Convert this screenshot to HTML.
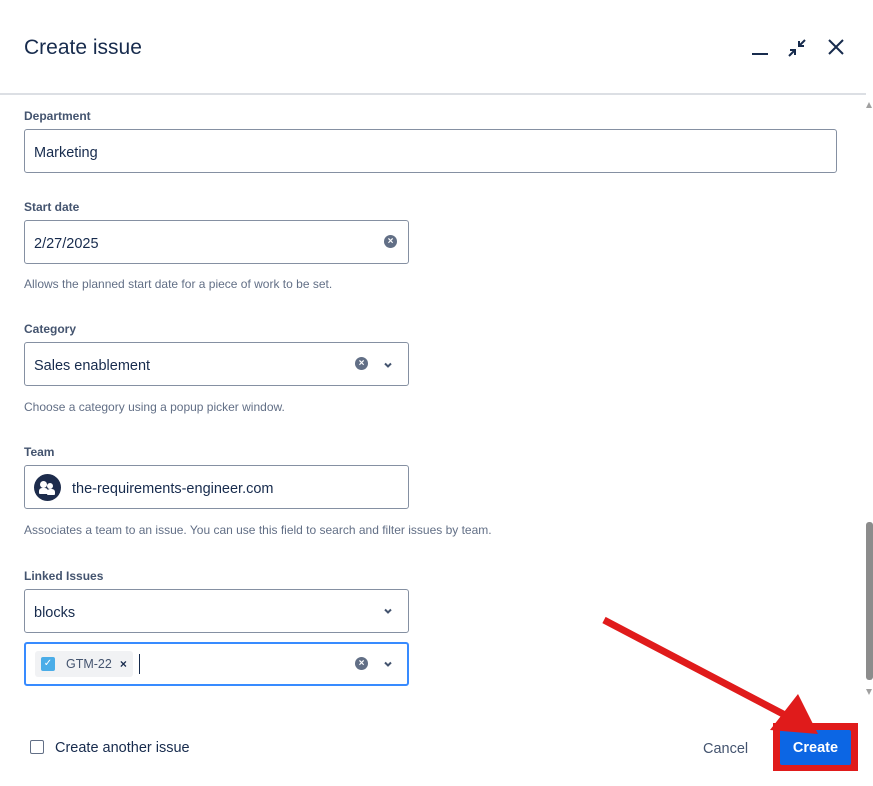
<!DOCTYPE html>
<html><head><meta charset="utf-8"><style>
*{box-sizing:border-box;margin:0;padding:0}
body{width:873px;height:786px;background:#fff;font-family:"Liberation Sans",sans-serif;color:#172b4d;position:relative;overflow:hidden}
.abs{position:absolute}
h1{position:absolute;left:24px;top:36px;font-size:21px;font-weight:400;color:#172b4d}
.hr{position:absolute;left:0;top:93px;width:866px;height:2px;background:#dcdfe4}
.lbl{position:absolute;left:24px;font-size:12px;font-weight:700;color:#44546f}
.inp{position:absolute;left:24px;border:1px solid #8590a2;border-radius:3px;height:44px;font-size:14.5px;color:#172b4d;display:flex;align-items:center;padding-left:9px;padding-top:3px}
.help{position:absolute;left:24px;font-size:12px;color:#626f86}
.clr{position:absolute;width:13px;height:13px;border-radius:50%;background:#626f86;color:#fff;font-size:10px;font-weight:700;line-height:13px;text-align:center}
.chev{position:absolute;width:12px;height:12px}
</style></head><body>
<h1>Create issue</h1>
<div class="abs" style="left:752px;top:53px;width:16px;height:2px;background:#172b4d"></div>
<svg class="abs" style="left:786px;top:37px" width="22" height="22" viewBox="0 0 22 22"><path d="M19 3L13 9M13 4V9H18M3 19L9 13M9 18V13H4" stroke="#172b4d" stroke-width="2" fill="none"/></svg>
<svg class="abs" style="left:826px;top:37px" width="20" height="20" viewBox="0 0 20 20"><path d="M3 3L17 17M17 3L3 17" stroke="#172b4d" stroke-width="2"/></svg>
<div class="hr"></div>

<div class="lbl" style="top:109px">Department</div>
<div class="inp" style="top:129px;width:813px">Marketing</div>

<div class="lbl" style="top:200px">Start date</div>
<div class="inp" style="top:220px;width:385px">2/27/2025</div>
<div class="clr" style="left:384px;top:235px">×</div>
<div class="help" style="top:277px">Allows the planned start date for a piece of work to be set.</div>

<div class="lbl" style="top:322px">Category</div>
<div class="inp" style="top:342px;width:385px">Sales enablement</div>
<div class="clr" style="left:355px;top:357px">×</div>
<svg class="chev" style="left:382px;top:359px" viewBox="0 0 12 12"><path d="M3 4.5L6 7.5L9 4.5" stroke="#44546f" stroke-width="2" fill="none"/></svg>
<div class="help" style="top:400px">Choose a category using a popup picker window.</div>

<div class="lbl" style="top:445px">Team</div>
<div class="inp" style="top:465px;width:385px;padding-left:9px;padding-top:0"><span style="display:inline-block;width:27px;height:27px;border-radius:50%;background:#1d2c4c;margin-right:11px;position:relative"><span class="abs" style="left:6px;top:7px;width:7px;height:7px;border-radius:50%;background:#fff"></span><span class="abs" style="left:13px;top:9px;width:6px;height:6px;border-radius:50%;background:#fff"></span><span class="abs" style="left:5px;top:14px;width:9px;height:6px;border-radius:3px 3px 1px 1px;background:#fff"></span><span class="abs" style="left:13px;top:15px;width:8px;height:6px;border-radius:3px 3px 1px 1px;background:#fff"></span></span><span style="padding-top:3px">the-requirements-engineer.com</span></div>
<div class="help" style="top:523px">Associates a team to an issue. You can use this field to search and filter issues by team.</div>

<div class="lbl" style="top:569px">Linked Issues</div>
<div class="inp" style="top:589px;width:385px">blocks</div>
<svg class="chev" style="left:382px;top:605px" viewBox="0 0 12 12"><path d="M3 4.5L6 7.5L9 4.5" stroke="#44546f" stroke-width="2" fill="none"/></svg>
<div class="inp" style="top:642px;width:385px;border:2px solid #388bff;padding-left:9px;padding-top:0">
 <span style="display:flex;align-items:center;background:#f1f2f4;height:26px;padding:0 6px;border-radius:3px;font-size:12.5px;color:#44546f"><span style="display:inline-block;width:14px;height:14px;background:#4bade8;border-radius:2px;color:#fff;font-size:10px;text-align:center;line-height:14px;margin-right:11px">✓</span>GTM-22<span style="margin-left:8px;font-size:12px;font-weight:700;color:#172b4d">×</span></span>
 <span style="display:inline-block;width:1px;height:20px;background:#172b4d;margin-left:6px"></span>
</div>
<div class="clr" style="left:355px;top:657px">×</div>
<svg class="chev" style="left:382px;top:658px" viewBox="0 0 12 12"><path d="M3 4.5L6 7.5L9 4.5" stroke="#44546f" stroke-width="2" fill="none"/></svg>

<div class="abs" style="left:866px;top:522px;width:7px;height:158px;background:#8c8c8c;border-radius:3px"></div>
<div class="abs" style="left:866px;top:102px;width:0;height:0;border-left:3.5px solid transparent;border-right:3.5px solid transparent;border-bottom:6px solid #a0a0a0"></div>
<div class="abs" style="left:866px;top:689px;width:0;height:0;border-left:3.5px solid transparent;border-right:3.5px solid transparent;border-top:6px solid #a0a0a0"></div>

<div class="abs" style="left:30px;top:740px;width:14px;height:14px;border:1.5px solid #626f86;border-radius:2px"></div>
<div class="abs" style="left:55px;top:740px;font-size:14.5px;color:#172b4d">Create another issue</div>
<div class="abs" style="left:703px;top:741px;font-size:14.5px;color:#44546f">Cancel</div>

<div class="abs" style="left:773px;top:723px;width:85px;height:48px;background:#e01b1b"></div>
<div class="abs" style="left:780px;top:730px;width:71px;height:35px;background:#0c66e4;border-radius:2px;color:#fff;font-weight:700;font-size:14.5px;text-align:center;line-height:37px">Create</div>
<svg class="abs" style="left:0;top:0" width="873" height="786"><line x1="604" y1="620" x2="785" y2="715" stroke="#e01b1b" stroke-width="7"/><polygon points="798,694 818,734 770,730" fill="#e01b1b"/></svg>
</body></html>
